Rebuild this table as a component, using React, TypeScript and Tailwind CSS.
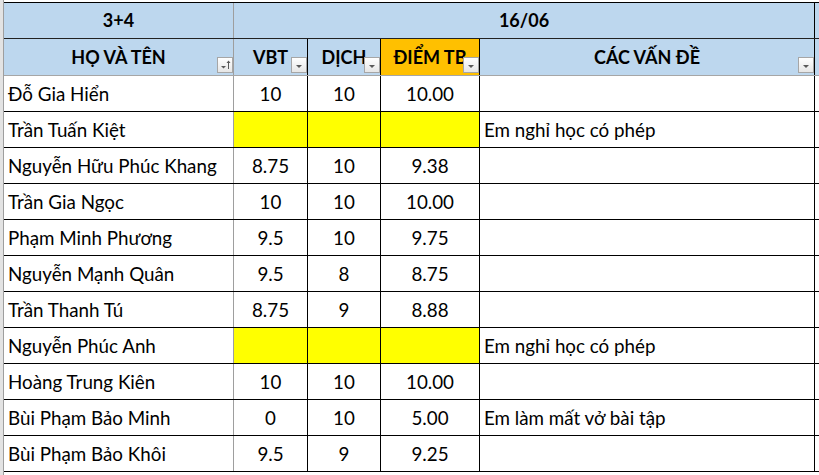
import React from "react";

type Row = { name: string; vbt: string; dich: string; tb: string; note: string; yellow?: boolean };

const rows: Row[] = [
  { name: "Đỗ Gia Hiển", vbt: "10", dich: "10", tb: "10.00", note: "" },
  { name: "Trần Tuấn Kiệt", vbt: "", dich: "", tb: "", note: "Em nghỉ học có phép", yellow: true },
  { name: "Nguyễn Hữu Phúc Khang", vbt: "8.75", dich: "10", tb: "9.38", note: "" },
  { name: "Trần Gia Ngọc", vbt: "10", dich: "10", tb: "10.00", note: "" },
  { name: "Phạm Minh Phương", vbt: "9.5", dich: "10", tb: "9.75", note: "" },
  { name: "Nguyễn Mạnh Quân", vbt: "9.5", dich: "8", tb: "8.75", note: "" },
  { name: "Trần Thanh Tú", vbt: "8.75", dich: "9", tb: "8.88", note: "" },
  { name: "Nguyễn Phúc Anh", vbt: "", dich: "", tb: "", note: "Em nghỉ học có phép", yellow: true },
  { name: "Hoàng Trung Kiên", vbt: "10", dich: "10", tb: "10.00", note: "" },
  { name: "Bùi Phạm Bảo Minh", vbt: "0", dich: "10", tb: "5.00", note: "Em làm mất vở bài tập" },
  { name: "Bùi Phạm Bảo Khôi", vbt: "9.5", dich: "9", tb: "9.25", note: "" },
];

function FilterBtn({ sort }: { sort?: boolean }) {
  return (
    <div className="absolute right-0 bottom-[2px] w-[16px] h-[16px] border border-[#a6a6a6] bg-gradient-to-b from-white to-[#e6e6e6] flex items-center justify-center">
      {sort ? (
        <svg width="14" height="14" viewBox="0 0 14 14">
          <polygon points="3,8 8,8 5.5,10.5" fill="#595959" />
          <line x1="10.5" y1="3" x2="10.5" y2="11" stroke="#595959" strokeWidth="1" />
          <polygon points="8.5,5 12.5,5 10.5,2.5" fill="#595959" />
        </svg>
      ) : (
        <svg width="14" height="14" viewBox="0 0 14 14">
          <polygon points="4,7 10,7 7,10" fill="#595959" />
        </svg>
      )}
    </div>
  );
}

export default function App() {
  const font = { fontFamily: "Lato, 'Liberation Sans', sans-serif" };
  return (
    <div className="w-[819px] h-[475px] overflow-hidden bg-white flex text-black" style={font}>
      <div className="w-[3px] shrink-0 bg-[#e3e3e3]" />
      <div className="flex flex-col pt-[3px] border-l border-[#9e9e9e]">
        <div className="w-[815px] h-px bg-black -mt-px" />
        <div className="flex h-[36px] bg-[#bdd7ee] border-b border-[#222]">
          <div className="w-[230px] border-r border-[#9e9e9e] flex items-center justify-center font-bold text-[18px]">
            3+4
          </div>
          <div className="w-[581px] border-r border-black flex items-center justify-center font-bold text-[18px]">
            16/06
          </div>
          <div className="w-[4px]" />
        </div>
        <div className="flex h-[37px] bg-[#bdd7ee] border-b border-[#a6a6a6] font-bold text-[18px]">
          <div className="relative w-[230px] border-r border-[#9e9e9e] flex items-center justify-center">
            <span>HỌ VÀ TÊN</span>
            <FilterBtn sort />
          </div>
          <div className="relative w-[74px] border-r border-black flex items-center justify-center overflow-hidden">
            <span className="whitespace-nowrap">VBT</span>
            <FilterBtn />
          </div>
          <div className="relative w-[73px] border-r border-black flex items-center justify-center overflow-hidden">
            <span className="whitespace-nowrap">DỊCH</span>
            <FilterBtn />
          </div>
          <div className="relative w-[99px] border-r border-black flex items-center justify-center overflow-hidden bg-[#ffc000]">
            <span className="whitespace-nowrap">ĐIỂM TB</span>
            <FilterBtn />
          </div>
          <div className="relative w-[335px] border-r border-black flex items-center justify-center">
            <span>CÁC VẤN ĐỀ</span>
            <FilterBtn />
          </div>
          <div className="w-[4px]" />
        </div>
        {rows.map((r, i) => (
          <div key={i} className="flex h-[36px] border-b border-black text-[18.8px]">
            <div className="w-[230px] border-r border-[#9e9e9e] flex items-center pl-[4px] pt-[2px] whitespace-nowrap">
              {r.name}
            </div>
            <div className={`w-[74px] border-r border-black flex items-center justify-center pt-[2px] ${r.yellow ? "bg-[#ffff00]" : ""}`}>
              {r.vbt}
            </div>
            <div className={`w-[73px] border-r border-black flex items-center justify-center pt-[2px] ${r.yellow ? "bg-[#ffff00]" : ""}`}>
              {r.dich}
            </div>
            <div className={`w-[99px] border-r border-black flex items-center justify-center pt-[2px] ${r.yellow ? "bg-[#ffff00]" : ""}`}>
              {r.tb}
            </div>
            <div className="w-[335px] border-r border-black flex items-center pl-[4px] pt-[2px] whitespace-nowrap">
              {r.note}
            </div>
            <div className="w-[4px]" />
          </div>
        ))}
      </div>
    </div>
  );
}
